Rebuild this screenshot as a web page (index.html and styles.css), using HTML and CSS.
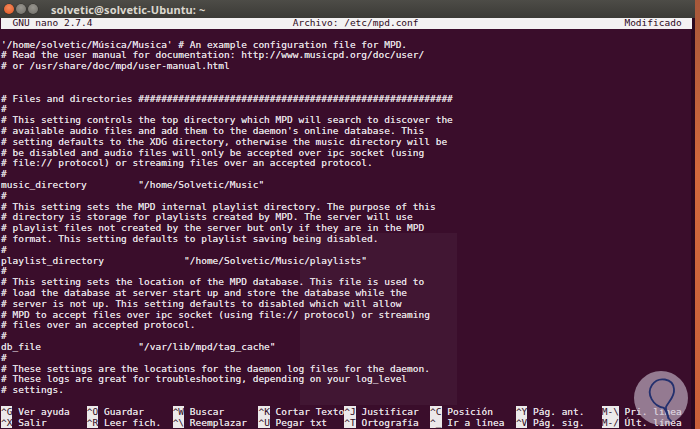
FILE: index.html
```html
<!DOCTYPE html>
<html lang="es">
<head>
    <meta charset="UTF-8">
    <meta name="viewport" content="width=device-width, initial-scale=1.0">
    <title>solvetic@solvetic-Ubuntu: ~</title>
    <link rel="stylesheet" href="styles.css">
</head>
<body>

    <div class="screen">
        <div class="window">

            <!-- Title bar -->
            <div class="titlebar">
                <div class="buttons">
                    <span class="btn btn-close"></span>
                    <span class="btn"></span>
                    <span class="btn"></span>
                </div>
                <span class="title">solvetic@solvetic-Ubuntu: ~</span>
            </div>

            <!-- Terminal running nano -->
            <div class="term">
<pre class="nano-header">  GNU nano 2.7.4                                   Archivo: /etc/mpd.conf                                    Modificado </pre>
<pre class="buffer">

'/home/solvetic/Música/Musica' # An example configuration file for MPD.
# Read the user manual for documentation: http://www.musicpd.org/doc/user/
# or /usr/share/doc/mpd/user-manual.html


# Files and directories #######################################################
#
# This setting controls the top directory which MPD will search to discover the
# available audio files and add them to the daemon's online database. This
# setting defaults to the XDG directory, otherwise the music directory will be
# be disabled and audio files will only be accepted over ipc socket (using
# file:// protocol) or streaming files over an accepted protocol.
#
music_directory         "/home/Solvetic/Music"
#
# This setting sets the MPD internal playlist directory. The purpose of this
# directory is storage for playlists created by MPD. The server will use
# playlist files not created by the server but only if they are in the MPD
# format. This setting defaults to playlist saving being disabled.
#
playlist_directory              "/home/Solvetic/Music/playlists"
#
# This setting sets the location of the MPD database. This file is used to
# load the database at server start up and store the database while the
# server is not up. This setting defaults to disabled which will allow
# MPD to accept files over ipc socket (using file:// protocol) or streaming
# files over an accepted protocol.
#
db_file                 "/var/lib/mpd/tag_cache"
#
# These settings are the locations for the daemon log files for the daemon.
# These logs are great for troubleshooting, depending on your log_level
# settings.
</pre>
<pre class="shortcuts"><span class="key">^G</span> Ver ayuda   <span class="key">^O</span> Guardar     <span class="key">^W</span> Buscar      <span class="key">^K</span> Cortar Texto<span class="key">^J</span> Justificar  <span class="key">^C</span> Posición    <span class="key">^Y</span> Pág. ant.   <span class="key">M-\</span> Pri. línea
<span class="key">^X</span> Salir       <span class="key">^R</span> Leer fich.  <span class="key">^\</span> Reemplazar  <span class="key">^U</span> Pegar txt   <span class="key">^T</span> Ortografía  <span class="key">^_</span> Ir a línea  <span class="key">^V</span> Pág. sig.   <span class="key">M-/</span> Últ. línea</pre>

                <!-- window showing through the translucent terminal -->
                <div class="ghost"></div>

                <!-- watermark -->
                <svg class="watermark" width="56" height="56" viewBox="0 0 56 56">
                    <circle cx="28" cy="28" r="27" fill="#cbbfd0" fill-opacity="0.62"/>
                    <path d="M38 51 C33 47 35 42 31 38 C20 36 13 24 19 15 C25 6 40 8 41 19 C42 27 35 32 33 37 C32 41 36 44 35 48"
                          fill="none" stroke="#23306e" stroke-width="1.8" stroke-linecap="round"/>
                </svg>
            </div>
        </div>
        <div class="desktop"></div>
    </div>

</body>
</html>
```

FILE: styles.css
```css
/* Page */
html, body {
    margin: 0;
    padding: 0;
    background: #2c0821;
}

.screen {
    display: flex;
    width: 700px;
    height: 429px;
    overflow: hidden;
}

.window {
    flex: 1;
    display: flex;
    flex-direction: column;
}

.desktop {
    width: 5px;
    background: linear-gradient(#a9583a, #d2693d 40%, #c9603a);
}

/* Title bar */
.titlebar {
    height: 18px;
    display: flex;
    align-items: center;
    gap: 13px;
    padding-left: 4px;
    background: linear-gradient(#4d4c47, #3b3a36);
}

.buttons {
    display: flex;
    gap: 2px;
}

.btn {
    width: 10px;
    height: 10px;
    border-radius: 50%;
    background: radial-gradient(circle at 50% 35%, #98968f, #6e6c66);
    box-shadow: 0 0 0 0.5px #2f2e2b;
}

.btn-close {
    background: radial-gradient(circle at 50% 35%, #f58a5c, #df5420);
}

.title {
    font-family: "Noto Sans", "DejaVu Sans", sans-serif;
    font-weight: bold;
    font-size: 11px;
    color: #dcd8cf;
    letter-spacing: 0.1px;
}

/* Terminal */
.term {
    position: relative;
    flex: 1;
    background: #3a0d2b;
    border-right: 4px solid #2a081f;
    padding-left: 1px;
}

.term pre {
    margin: 0;
    font-family: "DejaVu Sans Mono", "Liberation Mono", monospace;
    font-size: 9.5px;
    line-height: 10.8px;
    color: #e2dde0;
    text-shadow: 0 0 0.4px #e2dde0;
    position: relative;
    z-index: 1;
}

.nano-header {
    background: #f3f1f2;
    color: #2e0a23 !important;
    text-shadow: none !important;
    margin-right: -1px !important;
}

.buffer {
    height: 378px;
}

.key {
    background: #ece9ea;
    color: #2e0a23;
    text-shadow: none;
}

/* Faint window behind the terminal */
.ghost {
    position: absolute;
    left: 300px;
    top: 215px;
    width: 157px;
    height: 172px;
    background: rgba(255, 255, 255, 0.04);
}

.watermark {
    position: absolute;
    right: 2px;
    bottom: 3px;
    z-index: 2;
}
```
